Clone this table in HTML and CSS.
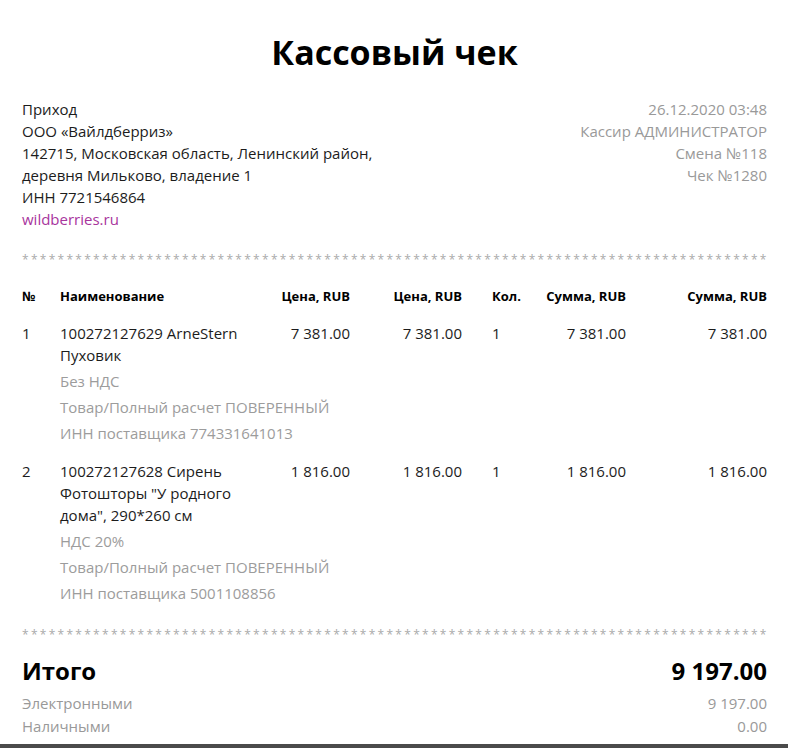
FILE: index.html
```html
<!DOCTYPE html>
<html lang="ru">
<head>
    <meta charset="UTF-8">
    <meta name="viewport" content="width=device-width, initial-scale=1.0">
    <title>Кассовый чек</title>
    <link rel="stylesheet" href="styles.css">
</head>
<body>
    <div class="receipt">
        <h1 class="title">Кассовый чек</h1>

        <div class="info">
            <div class="info-left">
                <div>Приход</div>
                <div>ООО «Вайлдберриз»</div>
                <div>142715, Московская область, Ленинский район,</div>
                <div>деревня Мильково, владение 1</div>
                <div>ИНН 7721546864</div>
                <a class="site" href="#">wildberries.ru</a>
            </div>
            <div class="info-right">
                <div>26.12.2020 03:48</div>
                <div>Кассир АДМИНИСТРАТОР</div>
                <div>Смена №118</div>
                <div>Чек №1280</div>
            </div>
        </div>

        <div class="stars">************************************************************************************</div>

        <div class="items">
            <div class="row head">
                <div>№</div>
                <div>Наименование</div>
                <div class="num">Цена, RUB</div>
                <div class="num">Цена, RUB</div>
                <div class="qty">Кол.</div>
                <div class="num">Сумма, RUB</div>
                <div class="num">Сумма, RUB</div>
            </div>

            <div class="row item">
                <div>1</div>
                <div>100272127629 ArneStern<br>Пуховик</div>
                <div class="num">7 381.00</div>
                <div class="num">7 381.00</div>
                <div class="qty">1</div>
                <div class="num">7 381.00</div>
                <div class="num">7 381.00</div>
                <div class="details">
                    <div>Без НДС</div>
                    <div>Товар/Полный расчет ПОВЕРЕННЫЙ</div>
                    <div>ИНН поставщика 774331641013</div>
                </div>
            </div>

            <div class="row item">
                <div>2</div>
                <div>100272127628 Сирень<br>Фотошторы "У родного<br>дома", 290*260 см</div>
                <div class="num">1 816.00</div>
                <div class="num">1 816.00</div>
                <div class="qty">1</div>
                <div class="num">1 816.00</div>
                <div class="num">1 816.00</div>
                <div class="details">
                    <div>НДС 20%</div>
                    <div>Товар/Полный расчет ПОВЕРЕННЫЙ</div>
                    <div>ИНН поставщика 5001108856</div>
                </div>
            </div>
        </div>

        <div class="stars">************************************************************************************</div>

        <div class="total">
            <span>Итого</span>
            <span>9 197.00</span>
        </div>

        <div class="payments">
            <div class="pay-row"><span>Электронными</span><span>9 197.00</span></div>
            <div class="pay-row"><span>Наличными</span><span>0.00</span></div>
            <div class="pay-row"><span>Предоплатой (зачетом аванса)</span><span>0.00</span></div>
        </div>
    </div>

    <div class="bottom-bar"></div>
</body>
</html>
```

FILE: styles.css
```css
body {
    margin: 0;
    padding: 0;
    background-color: #ffffff;
    font-family: "Open Sans", "Noto Sans", Arial, sans-serif;
    font-size: 15px;
    color: #1c1c1c;
    overflow: hidden;
}

.receipt {
    padding: 0 21px 0 22px;
}

.title {
    margin: 29px 0 23px;
    font-size: 34px;
    line-height: 46px;
    font-weight: 700;
    text-align: center;
    color: #000;
}

.info {
    display: flex;
    justify-content: space-between;
    line-height: 22px;
}

.info-right {
    text-align: right;
    color: #999;
}

.site {
    color: #a8359d;
    text-decoration: none;
}

.stars {
    margin-top: 20px;
    height: 14px;
    line-height: 20px;
    white-space: nowrap;
    font-size: 12px;
    letter-spacing: 2.28px;
    color: #aaa;
}

.items {
    margin-top: 21px;
}

.row {
    display: grid;
    grid-template-columns: 38px 190px 100px 112px 70px 94px 141px;
    line-height: 22px;
}

.row .num {
    text-align: right;
}

.row .qty {
    padding-left: 30px;
}

.head {
    font-size: 13px;
    font-weight: 700;
    color: #000;
}

.item {
    margin-top: 15px;
}

.item + .item {
    margin-top: 14px;
}

.details {
    grid-column: 2 / -1;
    margin-top: 2px;
    line-height: 26px;
    color: #9c9c9c;
}

.items + .stars {
    margin-top: 19px;
}

.total {
    display: flex;
    justify-content: space-between;
    margin-top: 16px;
    font-size: 24px;
    line-height: 32px;
    font-weight: 700;
    color: #000;
}

.payments {
    margin-top: 5px;
}

.pay-row {
    display: flex;
    justify-content: space-between;
    line-height: 23px;
    color: #999;
}

.bottom-bar {
    position: fixed;
    left: 0;
    right: 0;
    bottom: 0;
    height: 4px;
    background-color: #4b4b4b;
}
```
